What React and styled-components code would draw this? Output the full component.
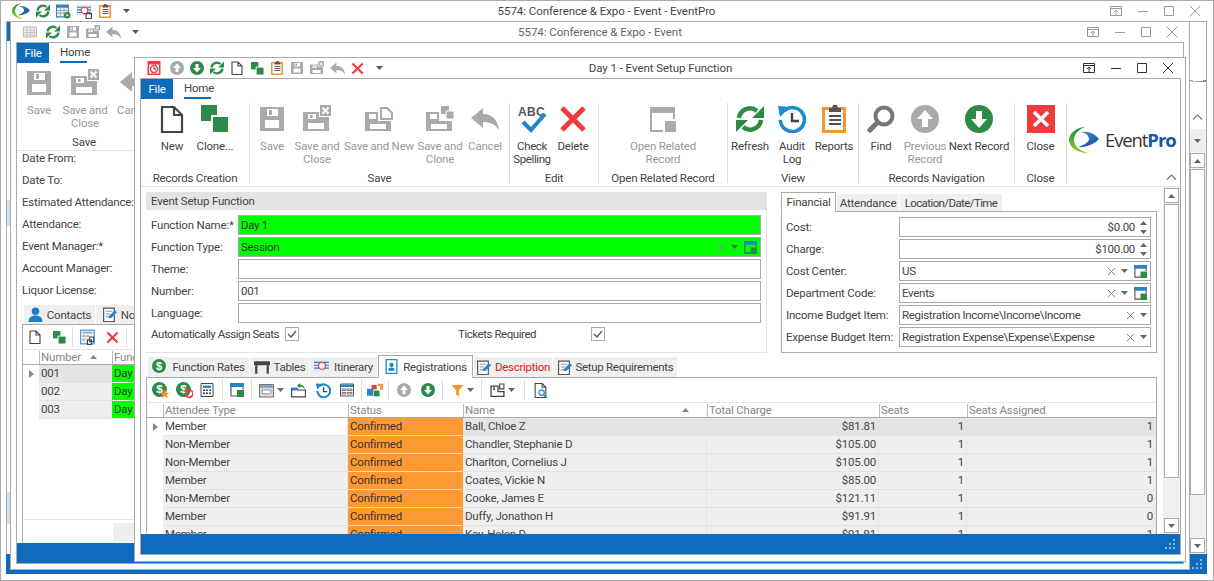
import styled, { createGlobalStyle } from "styled-components";

const GREEN = "#2e8b47";
const BLUE = "#0f6cbd";
const LINE = "#aaaaaa";
const SOFT = "#e4e4e4";
const TEXT = "#444444";

const Global = createGlobalStyle`
  html, body { margin: 0; padding: 0; background: #fff; }
  body { font-family: Roboto, "Liberation Sans", sans-serif; font-size: 11.5px; letter-spacing: -0.2px; color: ${TEXT}; }
  * { box-sizing: border-box; }
`;

const Desktop = styled.div`
  position: relative;
  width: 1214px;
  height: 581px;
  overflow: hidden;
  background: #fff;
`;

/* outer application frame */
const Shell = styled.div`
  width: 1214px;
  height: 581px;
  border: 1px solid ${LINE};
  display: flex;
  flex-direction: column;
  padding: 0 6px 6px 5px;
`;
const TitleBar = styled.div`
  flex: none;
  height: ${(p) => p.$h || 20}px;
  display: flex;
  align-items: center;
  position: relative;
  color: ${(p) => (p.$dim ? "#666" : TEXT)};
`;
const TitleText = styled.div`
  position: absolute;
  left: 0;
  right: 0;
  text-align: center;
  letter-spacing: -0.05px;
  pointer-events: none;
`;
const Qat = styled.div`
  display: flex;
  align-items: center;
  gap: ${(p) => p.$gap || 0}px;
  padding-left: ${(p) => p.$left || 0}px;
`;
const WinButtons = styled.div`
  margin-left: auto;
  display: flex;
  align-items: center;
  gap: ${(p) => p.$gap || 12}px;
  padding-right: ${(p) => p.$right || 0}px;
`;
const ShellClient = styled.div`
  flex: 1;
  min-height: 0;
  border: 1px solid ${LINE};
  border-bottom: none;
  border-right: none;
  display: flex;
`;
const ShellStrip = styled.div`
  width: 3px;
  background: linear-gradient(
    to bottom,
    ${BLUE} 0 19px,
    #fff 19px 178px,
    #cfe2f3 178px 204px,
    #fff 204px 470px,
    #cfe2f3 470px 502px,
    #fff 502px 532px,
    ${BLUE} 532px
  );
`;
const ShellGap = styled.div`
  flex: 1;
`;
const SideColumn = styled.div`
  flex: none;
  width: 18px;
  border-right: 1px solid ${LINE};
  display: flex;
  flex-direction: column;
  align-items: stretch;
`;
const SideLogo = styled.div`
  height: 60px;
  padding-top: 56px;
  font-size: 7px;
  line-height: 10px;
  letter-spacing: -0.4px;
  white-space: nowrap;
  overflow: hidden;
  color: #555;
  b { color: ${BLUE}; }
`;
const SideChevron = styled.div`
  height: 47px;
  display: flex;
  align-items: center;
  justify-content: center;
  padding-top: 22px;
`;
const SideDrop = styled.div`
  height: 23px;
  background: #efefef;
  display: flex;
  align-items: center;
  justify-content: center;
`;
const ScrollTrack = styled.div`
  flex: ${(p) => (p.$row ? "none" : "1")};
  min-height: 0;
  background: #f0f0f0;
  display: flex;
  flex-direction: column;
  width: 17px;
  padding: 1px;
  gap: 1px;
`;
const ScrollBtn = styled.div`
  flex: none;
  height: 15px;
  background: #fff;
  border: 1px solid ${LINE};
  display: flex;
  align-items: center;
  justify-content: center;
`;
const ScrollThumb = styled.div`
  flex: none;
  height: ${(p) => p.$h}px;
  background: #fff;
  border: 1px solid ${LINE};
  margin-bottom: auto;
`;
const Grip = styled.div`
  margin-left: auto;
  display: flex;
  align-items: flex-end;
  padding: 0 4px 4px 0;
  height: 100%;
`;
const StatusBar = styled.div`
  flex: none;
  height: 20px;
  background: ${BLUE};
  display: flex;
`;

/* windows on the desktop */
const EventWindow = styled.div`
  position: absolute;
  z-index: 1;
  left: 10px;
  top: 21px;
  width: 1180px;
  height: 549px;
  background: #fff;
  border: 1px solid ${LINE};
  padding: 0 5px 5px 5px;
  display: flex;
  flex-direction: column;
`;
const FunctionWindow = styled.div`
  position: absolute;
  z-index: 2;
  left: 134px;
  top: 57px;
  width: 1052px;
  height: 505px;
  background: #fff;
  border: 1px solid ${LINE};
  padding: 0 4px 6px 5px;
  display: flex;
  flex-direction: column;
`;
const Inner = styled.div`
  flex: 1;
  min-height: 0;
  border: 1px solid ${LINE};
  display: flex;
  flex-direction: column;
  overflow: hidden;
`;

/* ribbon */
const RibbonTabs = styled.div`
  flex: none;
  height: 21px;
  display: flex;
`;
const FileTab = styled.div`
  width: 32px;
  height: 20px;
  background: ${BLUE};
  color: #fff;
  display: flex;
  align-items: center;
  justify-content: center;
`;
const HomeTab = styled.div`
  margin-left: 11px;
  width: 27px;
  height: 20px;
  border-bottom: 2px solid ${BLUE};
  text-align: center;
  line-height: 18px;
`;
const Ribbon = styled.div`
  flex: none;
  height: 87px;
  border-bottom: 1px solid ${SOFT};
  display: flex;
`;
const RibbonGroup = styled.div`
  flex: none;
  width: ${(p) => p.$w}px;
  display: flex;
  flex-direction: column;
  padding-top: 5px;
`;
const GroupButtons = styled.div`
  flex: 1;
  display: flex;
  justify-content: ${(p) => (p.$center ? "center" : "flex-start")};
  padding-left: ${(p) => p.$left || 0}px;
`;
const GroupLabel = styled.div`
  height: 16px;
  padding-top: 1px;
  line-height: 14px;
  text-align: center;
  white-space: nowrap;
`;
const RibbonSep = styled.div`
  flex: none;
  width: 1px;
  margin: 3px 0 3px;
  background: #dddddd;
`;
const RibbonButton = styled.div`
  flex: none;
  width: ${(p) => p.$w}px;
  display: flex;
  flex-direction: column;
  align-items: center;
  color: ${(p) => (p.$off ? "#999" : TEXT)};
  text-align: center;
  line-height: 13px;
  white-space: nowrap;
  span { margin-top: 7px; }
`;
const SpellLabel = styled.span`
  && { margin-top: 5px; letter-spacing: -0.4px; }
`;
const LogoGroup = styled.div`
  flex: 1;
  display: flex;
  flex-direction: column;
  padding: 25px 0 0 2px;
`;
const LogoRow = styled.div`
  display: flex;
  align-items: center;
  gap: 6px;
`;
const LogoWord = styled.div`
  font-family: "Open Sans", sans-serif;
  font-size: 18.500px;
  letter-spacing: -1.1px;
  line-height: 26px;
  color: #333;
  b { color: #17599f; font-weight: 700; }
`;
const Collapse = styled.div`
  align-self: flex-end;
  margin-top: auto;
  padding: 0 3px 6px 0;
`;

/* form panels */
const Body = styled.div`
  flex: 1;
  min-height: 0;
  display: flex;
`;
const BodyMain = styled.div`
  flex: 1;
  min-width: 0;
  padding: 5px 6px 0 5px;
  display: flex;
  flex-direction: column;
`;
const TopPanels = styled.div`
  flex: none;
  display: flex;
  gap: 14px;
`;
const SetupPanel = styled.div`
  flex: none;
  width: 621px;
  height: 161px;
  border-right: 1px solid ${SOFT};
  border-bottom: 1px solid ${SOFT};
`;
const PanelHead = styled.div`
  height: 18px;
  background: ${SOFT};
  padding-left: 5px;
  line-height: 18px;
`;
const FormRows = styled.div`
  display: flex;
  flex-direction: column;
  gap: 2px;
  padding: ${(p) => (p.$side ? "5px 0 0 4px" : "5px 0 0 5px")};
`;
const FormRow = styled.div`
  display: flex;
  align-items: center;
  height: 20px;
`;
const Label = styled.div`
  flex: none;
  width: ${(p) => p.$w}px;
  white-space: nowrap;
`;
const Field = styled.div`
  flex: none;
  width: ${(p) => p.$w}px;
  height: 20px;
  border: 1px solid ${LINE};
  background: ${(p) => (p.$green ? "#00ff00" : "#fff")};
  color: ${(p) => (p.$green ? "#333" : TEXT)};
  display: flex;
  align-items: center;
  padding: 0 3px 0 2px;
  letter-spacing: -0.3px;
  white-space: nowrap;
`;
const FieldValue = styled.div`
  flex: 1;
  text-align: ${(p) => (p.$right ? "right" : "left")};
  padding-right: ${(p) => (p.$right ? 5 : 0)}px;
`;
const FieldTools = styled.div`
  flex: none;
  display: flex;
  align-items: center;
  gap: 6px;
`;
const Spinner = styled.div`
  display: flex;
  flex-direction: column;
  gap: 5px;
`;
const CheckRow = styled.div`
  display: flex;
  align-items: center;
  height: 14px;
  margin-top: 4px;
  padding-left: 5px;
  letter-spacing: -0.45px;
`;
const CheckBox = styled.div`
  flex: none;
  width: 14px;
  height: 14px;
  border: 1px solid ${LINE};
  display: flex;
  align-items: center;
  justify-content: center;
  margin-right: ${(p) => p.$after || 0}px;
`;
const SidePanel = styled.div`
  flex: none;
  width: 376px;
`;
const TabStrip = styled.div`
  display: flex;
  align-items: flex-end;
  height: ${(p) => p.$h}px;
  gap: ${(p) => p.$gap ?? 1}px;
  padding-left: ${(p) => p.$left || 0}px;
  position: relative;
  z-index: 1;
  margin-bottom: -1px;
`;
const Tab = styled.div`
  flex: none;
  width: ${(p) => p.$w}px;
  height: ${(p) => (p.$active ? "100%" : "calc(100% - 3px)")};
  margin-bottom: ${(p) => (p.$active ? 0 : 1)}px;
  background: ${(p) => (p.$active ? "#fff" : "#efefef")};
  border: ${(p) => (p.$active ? `1px solid ${LINE}` : "none")};
  border-bottom: ${(p) => (p.$active ? "1px solid #fff" : "none")};
  color: ${(p) => (p.$red ? "#ee1122" : TEXT)};
  letter-spacing: ${(p) => (p.$tight ? "-0.6px" : "inherit")};
  display: flex;
  align-items: center;
  justify-content: center;
  gap: 4px;
  white-space: nowrap;
`;
const SideBox = styled.div`
  height: 142px;
  border: 1px solid ${LINE};
`;

/* lower grid */
const LowerTabs = styled.div`
  flex: none;
  margin-top: 2px;
  letter-spacing: -0.3px;
`;
const GridBox = styled.div`
  flex: 1;
  min-height: 0;
  border: 1px solid ${LINE};
  border-bottom: none;
  overflow: hidden;
`;
const Toolbar = styled.div`
  height: 25px;
  border-bottom: 1px solid ${SOFT};
  display: flex;
  align-items: center;
  padding-left: ${(p) => p.$left || 0}px;
`;
const ToolSlot = styled.div`
  flex: none;
  width: ${(p) => p.$w || 24}px;
  height: 16px;
  display: flex;
  align-items: center;
  justify-content: center;
  gap: 3px;
`;
const ToolSep = styled.div`
  flex: none;
  width: 1px;
  height: 20px;
  background: #dddddd;
  margin: 0 ${(p) => p.$m || 2}px;
`;
const GridHead = styled.div`
  display: grid;
  grid-template-columns: ${(p) => p.$cols};
  height: 15px;
  border-bottom: 1px solid ${LINE};
`;
const HeadCell = styled.div`
  color: #888;
  border-left: 1px solid #bbb;
  padding: 0 0 2px 1px;
  line-height: 12px;
  height: 13px;
  margin-top: 1px;
  display: flex;
  align-items: center;
  justify-content: space-between;
  white-space: nowrap;
  overflow: hidden;
`;
const GridRow = styled.div`
  display: grid;
  grid-template-columns: ${(p) => p.$cols};
  height: 18px;
`;
const Cell = styled.div`
  background: ${(p) => p.$bg || "#efefef"};
  color: ${(p) => (p.$strong ? "#333" : TEXT)};
  border-bottom: 1px solid ${(p) => (p.$bg === "#ff9933" ? "#ffd9b0" : p.$bg === "#00ff00" ? "#d8f8d8" : "#e2e2e2")};
  border-right: 1px solid ${(p) => (p.$bg === "#ff9933" || p.$bg === "#00ff00" ? "transparent" : "#e6e6e6")};
  padding: 0 ${(p) => (p.$right ? 2 : 1)}px 0 2px;
  line-height: 17px;
  text-align: ${(p) => (p.$right ? "right" : "left")};
  white-space: nowrap;
  overflow: hidden;
`;
const Indicator = styled.div`
  background: #fff;
  display: flex;
  align-items: center;
  justify-content: center;
  height: 18px;
`;

/* left column of the event window */
const EventBody = styled.div`
  flex: 1;
  min-height: 0;
  display: flex;
  flex-direction: column;
`;
const EventForm = styled.div`
  flex: none;
  height: 152px;
  padding: 0 0 0 5px;
  display: flex;
  flex-direction: column;
  gap: 8px;
`;
const EventLabel = styled.div`
  height: 14px;
  line-height: 14px;
  white-space: nowrap;
`;
const ContactPanel = styled.div`
  flex: 1;
  min-height: 0;
  margin-left: 5px;
  border-left: 1px solid ${LINE};
  border-top: 1px solid ${LINE};
  display: flex;
  flex-direction: column;
`;
const ContactSpacer = styled.div`
  flex: 1;
  border-bottom: 1px solid ${SOFT};
`;
const ContactFoot = styled.div`
  flex: none;
  height: 23px;
  padding: 3px 0 2px 90px;
  div { height: 18px; background: #efefef; }
`;

/* icons */
const Svg = ({ s = 28, vb = 28, children }) => (
  <svg width={s} height={s} viewBox={`0 0 ${vb} ${vb}`} style={{ flex: "none", display: "block" }}>
    {children}
  </svg>
);
const Floppy = ({ s, c = "#aaa" }) => (
  <Svg s={s}>
    <path fill={c} fillRule="evenodd" d="M2 2h24v24H2zM9 4v7h11V4zM7 15v8h14v-8z" />
    <path fill={c} d="M11 5h3v5h-3z" />
  </Svg>
);
const FloppyClose = ({ s, c = "#aaa" }) => (
  <Svg s={s}>
    <path fill={c} fillRule="evenodd" d="M0 7h16v5h10v14H0zM5 9v5h8V9zM5 18v6h16v-6z" />
    <path fill={c} d="M7 10h2.500v3H7z" />
    <path fill={c} d="M17 0h11v11H17z" />
    <path stroke="#fff" strokeWidth="2" d="M19.500 2.500l6 6M25.500 2.500l-6 6" />
  </Svg>
);
const FloppyNew = ({ s, c = "#aaa" }) => (
  <Svg s={s}>
    <path fill={c} fillRule="evenodd" d="M0 7h13v9h13v10H0zM4 9v5h7V9zM5 19v5h16v-5z" />
    <path fill="none" stroke={c} strokeWidth="2" d="M16 14V3h6l5 5v6z" />
  </Svg>
);
const FloppyClone = ({ s, c = "#aaa" }) => (
  <Svg s={s}>
    <path fill={c} fillRule="evenodd" d="M0 7h13v9h13v10H0zM4 9v5h7V9zM5 19v5h16v-5z" />
    <path fill={c} d="M15 1h8v8h-8z" />
    <path fill={c} stroke="#fff" strokeWidth="1" d="M20 6h8v8h-8z" />
  </Svg>
);
const UndoArrow = ({ s, c = "#aaa" }) => (
  <Svg s={s}>
    <path fill={c} d="M12 3L0 13l12 10v-6c7 0 12 2 16 8-1-10-7-16-16-16z" />
  </Svg>
);
const DocIcon = ({ s, c = "#444" }) => (
  <Svg s={s}>
    <path fill="#fff" stroke={c} strokeWidth="2.200" d="M4 2h12l8 8v17H4zM16 2v8h8" />
  </Svg>
);
const CloneIcon = ({ s }) => (
  <Svg s={s}>
    <path fill={GREEN} d="M0 0h16v16H0z" />
    <path fill={GREEN} stroke="#fff" strokeWidth="2" d="M11 11h17v17H11z" />
  </Svg>
);
const XIcon = ({ s, c = "#ee3c3c", w = 5 }) => (
  <Svg s={s}>
    <path stroke={c} strokeWidth={w} d="M3 3l22 22M25 3L3 25" />
  </Svg>
);
const CircleArrow = ({ s, c = "#aaa", down }) => (
  <Svg s={s}>
    <circle cx="14" cy="14" r="14" fill={c} />
    <path fill="#fff" d={down ? "M11 6h6v8h5l-8 9-8-9h5z" : "M11 22h6v-8h5l-8-9-8 9h5z"} />
  </Svg>
);
const Refresh = ({ s }) => (
  <Svg s={s}>
    <path fill="none" stroke={GREEN} strokeWidth="4.500" d="M3 13A11 11 0 0 1 21 6M25 15A11 11 0 0 1 7 22" />
    <path fill={GREEN} d="M28 1v12H16zM0 27V15h12z" />
  </Svg>
);
const ReportIcon = ({ s }) => (
  <Svg s={s}>
    <path fill="#f7962f" d="M2 2h24v26H2z" />
    <path fill="#fff" d="M5 5h18v20H5z" />
    <path fill="#555" d="M9 3h3l1-3h4l1 3h3v4H9zM9 10h12v2H9zM9 14h12v2H9zM9 18h12v2H9z" />
  </Svg>
);
const AuditIcon = ({ s }) => (
  <Svg s={s}>
    <path fill="none" stroke="#1f8ad0" strokeWidth="3.600" d="M6 6A12 12 0 1 1 2.400 15" />
    <path fill="#1f8ad0" d="M0 1l12 1-10 10z" />
    <path fill="none" stroke="#444" strokeWidth="2.400" d="M14 8v8h7" />
  </Svg>
);
const FindIcon = ({ s }) => (
  <Svg s={s}>
    <circle cx="17" cy="11" r="8.500" fill="none" stroke="#777" strokeWidth="4" />
    <path stroke="#777" strokeWidth="5" strokeLinecap="round" d="M10 18l-7 7" />
  </Svg>
);
const SpellIcon = () => (
  <Svg s={30} vb={30}>
    <text x="1" y="11" fontFamily="'Liberation Sans', sans-serif" fontWeight="700" fontSize="12" letterSpacing="0.300" fill="#555">
      ABC
    </text>
    <path fill="none" stroke="#1f88cc" strokeWidth="4" d="M6 17l8 8L28 9" />
  </Svg>
);
const RelatedIcon = ({ s, c = "#aaa" }) => (
  <Svg s={s}>
    <path fill="none" stroke={c} strokeWidth="2" d="M2 3h23v23H2z" />
    <path fill={c} d="M1 2h25v6H1z" />
    <path fill={c} stroke="#fff" strokeWidth="2" d="M15 15h13v13H15z" />
  </Svg>
);
const CloseSquare = ({ s }) => (
  <Svg s={s}>
    <path fill="#ee3c3c" d="M0 0h28v28H0z" />
    <path stroke="#fff" strokeWidth="3.500" d="M7 7l14 14M21 7L7 21" />
  </Svg>
);
const LogoMark = ({ s = 30, id = "a" }) => (
  <Svg s={s} vb={30}>
    <defs>
      <linearGradient id={`g${id}`} x1="0" y1="0" x2="0" y2="1">
        <stop offset="0" stopColor="#1c8a3a" />
        <stop offset="1" stopColor="#98cb2c" />
      </linearGradient>
      <linearGradient id={`b${id}`} x1="0" y1="0" x2="1" y2="1">
        <stop offset="0" stopColor="#3f9fdf" />
        <stop offset="1" stopColor="#123d8e" />
      </linearGradient>
    </defs>
    <path fill={`url(#g${id})`} d="M16 2C6 3 0 9 0 15c0 7 8 13 19 13-8-2-14-7-14-13C5 9 10 4 16 2z" />
    <path fill={`url(#b${id})`} d="M12 7c7-1 13 1 18 7-5 5-13 9-21 8 6-2 11-5 11-8 0-3-3-6-8-7z" />
  </Svg>
);
const AlarmIcon = ({ s }) => (
  <Svg s={s}>
    <path fill="#ee3c3c" d="M1 0h26v28H1z" />
    <path fill="#fff" d="M4 7h20v18H4z" />
    <circle cx="14" cy="16" r="7" fill="none" stroke="#ee3c3c" strokeWidth="3" />
    <path stroke="#333" strokeWidth="2" fill="none" d="M14 12v4h4" />
  </Svg>
);
const SheetIcon = ({ s, c = "#bbb", edge = "#bbb" }) => (
  <Svg s={s}>
    <path fill="#f4f4f4" stroke={edge} strokeWidth="2" d="M1 4h26v20H1z" />
    <path stroke={c} strokeWidth="1.500" d="M1 10h26M1 15h26M1 20h26M8 4v20M15 4v20M22 4v20" />
  </Svg>
);
const GridGearIcon = ({ s }) => (
  <Svg s={s}>
    <path fill="#eef4fa" stroke="#2a83c6" strokeWidth="2" d="M1 2h22v22H1z" />
    <path fill="#2a83c6" d="M1 2h22v5H1z" />
    <path stroke="#9a9a9a" strokeWidth="1.600" d="M1 12h22M1 17h22M8 7v17M15 7v17" />
    <circle cx="21" cy="21" r="6" fill={GREEN} />
    <circle cx="21" cy="21" r="2" fill="#fff" />
  </Svg>
);
const GridClockIcon = ({ s, badge }) => (
  <Svg s={s}>
    <path fill="#dcebf7" d="M0 1h26v20H0z" />
    <path stroke="#1f88cc" strokeWidth="2" d="M0 6h26M0 11h26M0 16h26" />
    <circle cx="14" cy="12" r="6" fill="#fff" stroke="#ee3c3c" strokeWidth="2" />
    {badge && <path fill="#fff" stroke="#444" strokeWidth="2" d="M17 18h10v9H17z" />}
  </Svg>
);
const SheetCopyIcon = ({ s }) => (
  <Svg s={s}>
    <path fill="#e8f1f8" stroke="#4a9ad4" strokeWidth="2" d="M1 2h24v24H1z" />
    <path fill="#aaa" d="M4 5h18v3H4zM4 11h5v3H4zM11 11h5v3h-5zM4 17h5v3H4z" />
    <path fill="#fff" stroke="#444" strokeWidth="2" d="M17 14h7v8h-7zM13 19h7v8h-7z" />
  </Svg>
);
const DollarIcon = ({ s = 16, badge }) => (
  <Svg s={s} vb={16}>
    <circle cx="7" cy="7" r="7" fill={GREEN} />
    <text x="7" y="10.800" textAnchor="middle" fontFamily="'Liberation Sans', sans-serif" fontWeight="700" fontSize="11" fill="#fff">
      $
    </text>
    {badge === "star" && <path fill="#f7962f" d="M12 7l1.400 3h3l-2.400 2 1 3.200L12 13.400 9 15.200l1-3.200-2.400-2h3z" />}
    {badge === "refresh" && <path fill="none" stroke="#ee3c3c" strokeWidth="1.600" d="M9 11a3.500 3.500 0 1 0 1.500-3M9 6.500V9h2.500" />}
  </Svg>
);
const CalcIcon = ({ s }) => (
  <Svg s={s}>
    <path fill="#fff" stroke="#444" strokeWidth="2" d="M2 1h24v26H2z" />
    <path fill="#2a83c6" d="M6 5h16v5H6z" />
    <path fill="#444" d="M6 13h4v3H6zM12 13h4v3h-4zM18 13h4v3h-4zM6 19h4v3H6zM12 19h4v3h-4zM18 19h4v3h-4z" />
  </Svg>
);
const PickIcon = ({ s = 13 }) => (
  <Svg s={s}>
    <path fill="none" stroke="#555" strokeWidth="2.400" d="M2 4v22h13M26 4v9" />
    <path fill="#2a83c6" d="M0 0h28v8H0z" />
    <path fill={GREEN} d="M14 14h14v14H14z" />
  </Svg>
);
const WindowDropIcon = ({ s }) => (
  <Svg s={s}>
    <path fill="#ddd" stroke="#777" strokeWidth="2" d="M1 3h26v23H1z" />
    <path fill="#7aa9cf" d="M2 4h24v5H2z" />
    <path fill="#fff" stroke="#888" strokeWidth="1.600" d="M6 13h16v7H6z" />
  </Svg>
);
const FolderUpIcon = ({ s }) => (
  <Svg s={s}>
    <path fill="#fff" stroke="#444" strokeWidth="2.200" d="M1 10h10l2 3h14v13H1z" />
    <path fill="#2a83c6" d="M1 9h11V14H1z" />
    <path fill={GREEN} d="M17 0l-6 5 6 5V7c4 0 7 1 8 5 1-6-3-8-8-9z" />
  </Svg>
);
const HistoryIcon = ({ s }) => (
  <Svg s={s}>
    <path fill="none" stroke="#1f8ad0" strokeWidth="4" d="M6 6A12 12 0 1 1 2.400 15" />
    <path fill="#1f8ad0" d="M0 1l12 1-10 10z" />
    <path fill="none" stroke="#444" strokeWidth="2.600" d="M14 8v8h7" />
  </Svg>
);
const PanelsIcon = ({ s }) => (
  <Svg s={s}>
    <path fill="#fff" stroke="#555" strokeWidth="2" d="M1 2h26v24H1z" />
    <path fill="#2a83c6" d="M2 3h24v5H2z" />
    <path fill="none" stroke="#777" strokeWidth="2" d="M4 12h8v3H4zM4 19h8v3H4zM15 12h9v3h-9zM15 19h9v3h-9z" />
  </Svg>
);
const BlocksIcon = ({ s }) => (
  <Svg s={s}>
    <path fill="#2a83c6" d="M0 12h11v12H0z" />
    <path fill={GREEN} d="M12 15h10v10H12z" />
    <path fill="#e0483a" d="M8 5h9v8H8z" />
    <path fill="#f7962f" d="M19 3h9v11h-5V7h-4z" />
  </Svg>
);
const FilterIcon = ({ s }) => (
  <Svg s={s}>
    <path fill="#f7962f" d="M1 2h26L17 14v13l-6-4v-9z" />
  </Svg>
);
const LayoutIcon = ({ s }) => (
  <Svg s={s}>
    <path fill="none" stroke="#444" strokeWidth="2.400" d="M2 6h13v10h11v9H2z" />
    <path fill="#444" d="M6 8h3v5H6z" />
    <path fill="none" stroke="#444" strokeWidth="2" d="M18 2h8v9h-8z" />
  </Svg>
);
const PreviewIcon = ({ s }) => (
  <Svg s={s}>
    <path fill="#fff" stroke="#444" strokeWidth="2" d="M4 1h13l7 7v19H4zM17 1v7h7" />
    <circle cx="16" cy="18" r="5" fill="#fff" stroke="#1f88cc" strokeWidth="2.400" />
    <path stroke="#1f88cc" strokeWidth="2.600" d="M20 22l5 5" />
  </Svg>
);
const NoteIcon = ({ s = 15 }) => (
  <Svg s={s}>
    <path fill="#fff" stroke="#555" strokeWidth="2.200" d="M3 2h20v25H3z" />
    <path stroke="#999" strokeWidth="2" d="M7 8h12M7 13h8M7 18h6" />
    <path fill="#2a83c6" d="M12 21l2-5L24 6l4 4-10 10z" />
  </Svg>
);
const TableTabIcon = ({ s = 16 }) => (
  <Svg s={s}>
    <path fill="#444" d="M2 4h24a2 2 0 0 1 2 2v5H0V6a2 2 0 0 1 2-2z" />
    <path fill="#444" d="M2 11h4v15H2zM22 11h4v15h-4z" />
  </Svg>
);
const PersonIcon = ({ s = 15 }) => (
  <Svg s={s}>
    <circle cx="14" cy="8" r="7" fill="#1f7fc4" />
    <path fill="#1f7fc4" d="M1 28c0-8 5-12 13-12s13 4 13 12z" />
  </Svg>
);
const BadgeIcon = ({ s = 15 }) => (
  <Svg s={s}>
    <path fill="#fff" stroke="#1f88cc" strokeWidth="2.400" d="M4 1h20v26H4z" />
    <circle cx="14" cy="11" r="4" fill="#1f7fc4" />
    <path fill="#1f7fc4" d="M8 22c0-4 2-6 6-6s6 2 6 6z" />
  </Svg>
);
const Caret = ({ c = "#666", up, w = 7 }) => (
  <svg width={w} height={4} viewBox="0 0 7 4" style={{ flex: "none", display: "block" }}>
    <path fill={c} d={up ? "M3.500 0L7 4H0z" : "M0 0h7L3.500 4z"} />
  </svg>
);
const MiniX = ({ c = "#888" }) => (
  <svg width={7} height={7} viewBox="0 0 7 7" style={{ flex: "none", display: "block" }}>
    <path stroke={c} strokeWidth="1" d="M0 0l7 7M7 0L0 7" />
  </svg>
);
const Chevron = ({ c = "#777" }) => (
  <svg width={11} height={6} viewBox="0 0 11 6" style={{ flex: "none", display: "block" }}>
    <path fill="none" stroke={c} strokeWidth="1.200" d="M1 5.500l4.500-4.500 4.500 4.500" />
  </svg>
);
const RowArrow = () => (
  <svg width={5} height={8} viewBox="0 0 5 8" style={{ display: "block" }}>
    <path fill="#888" d="M0 0l5 4-5 4z" />
  </svg>
);
const CheckMark = () => (
  <svg width={10} height={8} viewBox="0 0 10 8" style={{ display: "block" }}>
    <path fill="none" stroke="#555" strokeWidth="1.300" d="M1 4l3 3 5-6" />
  </svg>
);
const GripDots = () => (
  <svg width={11} height={11} viewBox="0 0 11 11" style={{ display: "block" }}>
    <path fill="#8db8de" d="M8 0h2v2H8zM4 4h2v2H4zM8 4h2v2H8zM0 8h2v2H0zM4 8h2v2H4zM8 8h2v2H8z" />
  </svg>
);
const WinControls = ({ c, right }) => (
  <WinButtons $gap={16} $right={right}>
    <svg width={12} height={10} viewBox="0 0 12 10" style={{ display: "block" }}>
      <path fill="none" stroke={c} strokeWidth="1" d="M.5.500h11v9H.5zM.5 2.500h11" />
      <path fill="none" stroke={c} strokeWidth="1" d="M6 9V4.500M4 6l2-2 2 2" />
    </svg>
    <svg width={10} height={10} viewBox="0 0 10 10" style={{ display: "block" }}>
      <path stroke={c} d="M0 5.500h10" />
    </svg>
    <svg width={10} height={10} viewBox="0 0 10 10" style={{ display: "block" }}>
      <path fill="none" stroke={c} d="M.5.500h9v9h-9z" />
    </svg>
    <svg width={10} height={10} viewBox="0 0 10 10" style={{ display: "block" }}>
      <path stroke={c} d="M0 0l10 10M10 0L0 10" />
    </svg>
  </WinButtons>
);

const LOWER_COLS = "16px 185px 115px 244px 172px 88px 1fr";
const CONTACT_COLS = "16px 73px 1fr";

const people = [
  ["Member", "Ball, Chloe Z", "$81.81", 1, 1],
  ["Non-Member", "Chandler, Stephanie D", "$105.00", 1, 1],
  ["Non-Member", "Charlton, Cornelius J", "$105.00", 1, 1],
  ["Member", "Coates, Vickie N", "$85.00", 1, 1],
  ["Non-Member", "Cooke, James E", "$121.11", 1, 0],
  ["Member", "Duffy, Jonathon H", "$91.91", 1, 0],
  ["Member", "Kay, Helen D", "$91.91", 1, 1],
];

function RegistrationRow({ row, index }) {
  const first = index === 0;
  const bg = first ? SOFT : "#efefef";
  return (
    <GridRow $cols={LOWER_COLS}>
      <Indicator>{first && <RowArrow />}</Indicator>
      <Cell $bg={first ? "#fff" : "#efefef"}>{row[0]}</Cell>
      <Cell $bg="#ff9933" $strong>Confirmed</Cell>
      <Cell $bg={bg}>{row[1]}</Cell>
      <Cell $bg={bg} $right>{row[2]}</Cell>
      <Cell $bg={bg} $right>{row[3]}</Cell>
      <Cell $bg={bg} $right>{row[4]}</Cell>
    </GridRow>
  );
}

function PickTools({ pick }) {
  return (
    <FieldTools>
      <MiniX />
      <Caret />
      {pick && <PickIcon />}
    </FieldTools>
  );
}

function SideField({ label, value, pick }) {
  return (
    <FormRow>
      <Label $w={113}>{label}</Label>
      <Field $w={252}>
        <FieldValue>{value}</FieldValue>
        <PickTools pick={pick} />
      </Field>
    </FormRow>
  );
}

function MoneyField({ label, value }) {
  return (
    <FormRow>
      <Label $w={113}>{label}</Label>
      <Field $w={252}>
        <FieldValue $right>{value}</FieldValue>
        <Spinner>
          <Caret up />
          <Caret />
        </Spinner>
      </Field>
    </FormRow>
  );
}

function EventWindowView() {
  return (
    <EventWindow>
      <TitleBar $dim>
        <TitleText>5574: Conference &amp; Expo - Event</TitleText>
        <Qat $left={4}>
          <ToolSlot $w={20}><SheetIcon s={14} /></ToolSlot>
          <ToolSlot $w={26}><Refresh s={14} /></ToolSlot>
          <ToolSlot $w={14}><Floppy s={14} /></ToolSlot>
          <ToolSlot $w={26}><FloppyClose s={14} /></ToolSlot>
          <ToolSlot $w={14}><UndoArrow s={15} /></ToolSlot>
          <ToolSlot $w={30}><Caret c="#555" /></ToolSlot>
        </Qat>
        <WinControls c="#999" right={7} />
      </TitleBar>
      <Inner>
        <RibbonTabs>
          <FileTab>File</FileTab>
          <HomeTab>Home</HomeTab>
        </RibbonTabs>
        <Ribbon>
          <RibbonGroup $w={134}>
            <GroupButtons>
              <RibbonButton $w={44} $off>
                <Floppy s={28} />
                <span>Save</span>
              </RibbonButton>
              <RibbonButton $w={48} $off>
                <FloppyClose s={28} />
                <span>Save and<br />Close</span>
              </RibbonButton>
              <RibbonButton $w={50} $off>
                <UndoArrow s={28} />
                <span>Cancel</span>
              </RibbonButton>
            </GroupButtons>
            <GroupLabel>Save</GroupLabel>
          </RibbonGroup>
        </Ribbon>
        <EventBody>
          <EventForm>
            <EventLabel>Date From:</EventLabel>
            <EventLabel>Date To:</EventLabel>
            <EventLabel>Estimated Attendance:</EventLabel>
            <EventLabel>Attendance:</EventLabel>
            <EventLabel>Event Manager:*</EventLabel>
            <EventLabel>Account Manager:</EventLabel>
            <EventLabel>Liquor License:</EventLabel>
          </EventForm>
          <TabStrip $h={22} $left={7} $gap={1}>
            <Tab $w={71}>
              <PersonIcon />
              Contacts
            </Tab>
            <Tab $w={60}>
              <NoteIcon />
              Notes
            </Tab>
          </TabStrip>
          <ContactPanel>
            <Toolbar>
              <ToolSlot><DocIcon s={14} /></ToolSlot>
              <ToolSlot><CloneIcon s={13} /></ToolSlot>
              <ToolSep $m={1} />
              <ToolSlot $w={28}><SheetCopyIcon s={16} /></ToolSlot>
              <ToolSlot $w={20}><XIcon s={13} w={4.5} /></ToolSlot>
              <ToolSep $m={4} />
            </Toolbar>
            <GridHead $cols={CONTACT_COLS}>
              <div />
              <HeadCell>
                Number
                <span style={{ paddingRight: 14 }}><Caret up c="#888" w={9} /></span>
              </HeadCell>
              <HeadCell>Function</HeadCell>
            </GridHead>
            {["001", "002", "003"].map((n, i) => (
              <GridRow $cols={CONTACT_COLS} key={n}>
                <Indicator>{i === 0 && <RowArrow />}</Indicator>
                <Cell $bg={i === 0 ? SOFT : "#efefef"}>{n}</Cell>
                <Cell $bg="#00ff00" $strong>Day 1</Cell>
              </GridRow>
            ))}
            <ContactSpacer />
            <ContactFoot><div /></ContactFoot>
          </ContactPanel>
        </EventBody>
        <StatusBar />
      </Inner>
    </EventWindow>
  );
}

function FunctionWindowView() {
  return (
    <FunctionWindow>
      <TitleBar>
        <TitleText>Day 1 - Event Setup Function</TitleText>
        <Qat $left={4}>
          <ToolSlot $w={20}><AlarmIcon s={14} /></ToolSlot>
          <ToolSlot $w={3} />
          <ToolSlot $w={20}><CircleArrow s={14} /></ToolSlot>
          <ToolSlot $w={20}><CircleArrow s={14} c={GREEN} down /></ToolSlot>
          <ToolSlot $w={20}><Refresh s={14} /></ToolSlot>
          <ToolSlot $w={20}><DocIcon s={14} /></ToolSlot>
          <ToolSlot $w={20}><CloneIcon s={13} /></ToolSlot>
          <ToolSlot $w={20}><ReportIcon s={14} /></ToolSlot>
          <ToolSlot $w={20}><Floppy s={14} /></ToolSlot>
          <ToolSlot $w={20}><FloppyClose s={14} /></ToolSlot>
          <ToolSlot $w={20}><UndoArrow s={15} /></ToolSlot>
          <ToolSlot $w={20}><XIcon s={13} w={4.5} /></ToolSlot>
          <ToolSlot $w={24}><Caret c="#555" /></ToolSlot>
        </Qat>
        <WinControls c="#333" right={8} />
      </TitleBar>
      <Inner>
        <RibbonTabs>
          <FileTab>File</FileTab>
          <HomeTab>Home</HomeTab>
        </RibbonTabs>
        <Ribbon>
          <RibbonGroup $w={108}>
            <GroupButtons $left={14}>
              <RibbonButton $w={34}>
                <DocIcon s={28} />
                <span>New</span>
              </RibbonButton>
              <RibbonButton $w={52}>
                <CloneIcon s={28} />
                <span>Clone...</span>
              </RibbonButton>
            </GroupButtons>
            <GroupLabel>Records Creation</GroupLabel>
          </RibbonGroup>
          <RibbonSep />
          <RibbonGroup $w={259}>
            <GroupButtons $left={4}>
              <RibbonButton $w={36} $off>
                <Floppy s={28} />
                <span>Save</span>
              </RibbonButton>
              <RibbonButton $w={54} $off>
                <FloppyClose s={28} />
                <span>Save and<br />Close</span>
              </RibbonButton>
              <RibbonButton $w={70} $off>
                <FloppyNew s={28} />
                <span>Save and New</span>
              </RibbonButton>
              <RibbonButton $w={52} $off>
                <FloppyClone s={28} />
                <span>Save and<br />Clone</span>
              </RibbonButton>
              <RibbonButton $w={38} $off>
                <UndoArrow s={28} />
                <span>Cancel</span>
              </RibbonButton>
            </GroupButtons>
            <GroupLabel>Save</GroupLabel>
          </RibbonGroup>
          <RibbonSep />
          <RibbonGroup $w={88}>
            <GroupButtons>
              <RibbonButton $w={44}>
                <SpellIcon />
                <SpellLabel>Check<br />Spelling</SpellLabel>
              </RibbonButton>
              <RibbonButton $w={38}>
                <XIcon s={28} />
                <span>Delete</span>
              </RibbonButton>
            </GroupButtons>
            <GroupLabel>Edit</GroupLabel>
          </RibbonGroup>
          <RibbonSep />
          <RibbonGroup $w={128}>
            <GroupButtons $center>
              <RibbonButton $w={80} $off>
                <RelatedIcon s={28} />
                <span>Open Related<br />Record</span>
              </RibbonButton>
            </GroupButtons>
            <GroupLabel>Open Related Record</GroupLabel>
          </RibbonGroup>
          <RibbonSep />
          <RibbonGroup $w={130}>
            <GroupButtons>
              <RibbonButton $w={44}>
                <Refresh s={28} />
                <span>Refresh</span>
              </RibbonButton>
              <RibbonButton $w={40}>
                <AuditIcon s={28} />
                <span>Audit<br />Log</span>
              </RibbonButton>
              <RibbonButton $w={44}>
                <ReportIcon s={28} />
                <span>Reports</span>
              </RibbonButton>
            </GroupButtons>
            <GroupLabel>View</GroupLabel>
          </RibbonGroup>
          <RibbonSep />
          <RibbonGroup $w={155}>
            <GroupButtons>
              <RibbonButton $w={44}>
                <FindIcon s={28} />
                <span>Find</span>
              </RibbonButton>
              <RibbonButton $w={44} $off>
                <CircleArrow s={28} />
                <span>Previous<br />Record</span>
              </RibbonButton>
              <RibbonButton $w={64}>
                <CircleArrow s={28} c={GREEN} down />
                <span>Next Record</span>
              </RibbonButton>
            </GroupButtons>
            <GroupLabel>Records Navigation</GroupLabel>
          </RibbonGroup>
          <RibbonSep />
          <RibbonGroup $w={51}>
            <GroupButtons $center>
              <RibbonButton $w={50}>
                <CloseSquare s={28} />
                <span>Close</span>
              </RibbonButton>
            </GroupButtons>
            <GroupLabel>Close</GroupLabel>
          </RibbonGroup>
          <RibbonSep />
          <LogoGroup>
            <LogoRow>
              <LogoMark s={30} id="m" />
              <LogoWord>
                Event<b>Pro</b>
              </LogoWord>
            </LogoRow>
            <Collapse>
              <Chevron />
            </Collapse>
          </LogoGroup>
        </Ribbon>
        <Body>
          <BodyMain>
            <TopPanels>
              <SetupPanel>
                <PanelHead>Event Setup Function</PanelHead>
                <FormRows>
                  <FormRow>
                    <Label $w={87}>Function Name:*</Label>
                    <Field $w={523} $green>Day 1</Field>
                  </FormRow>
                  <FormRow>
                    <Label $w={87}>Function Type:</Label>
                    <Field $w={523} $green>
                      <FieldValue>Session</FieldValue>
                      <PickTools pick />
                    </Field>
                  </FormRow>
                  <FormRow>
                    <Label $w={87}>Theme:</Label>
                    <Field $w={523} />
                  </FormRow>
                  <FormRow>
                    <Label $w={87}>Number:</Label>
                    <Field $w={523}>001</Field>
                  </FormRow>
                  <FormRow>
                    <Label $w={87}>Language:</Label>
                    <Field $w={523} />
                  </FormRow>
                </FormRows>
                <CheckRow>
                  <Label $w={134}>Automatically Assign Seats</Label>
                  <CheckBox $after={159}><CheckMark /></CheckBox>
                  <Label $w={133}>Tickets Required</Label>
                  <CheckBox><CheckMark /></CheckBox>
                </CheckRow>
              </SetupPanel>
              <SidePanel>
                <TabStrip $h={20} $gap={1}>
                  <Tab $w={55} $active>Financial</Tab>
                  <Tab $w={62}>Attendance</Tab>
                  <Tab $w={102} $tight>Location/Date/Time</Tab>
                </TabStrip>
                <SideBox>
                  <FormRows $side>
                    <MoneyField label="Cost:" value="$0.00" />
                    <MoneyField label="Charge:" value="$100.00" />
                    <SideField label="Cost Center:" value="US" pick />
                    <SideField label="Department Code:" value="Events" pick />
                    <SideField label="Income Budget Item:" value="Registration Income\Income\Income" />
                    <SideField label="Expense Budget Item:" value="Registration Expense\Expense\Expense" />
                  </FormRows>
                </SideBox>
              </SidePanel>
            </TopPanels>
            <LowerTabs>
              <TabStrip $h={23} $left={2} $gap={1}>
                <Tab $w={101}>
                  <DollarIcon s={16} />
                  Function Rates
                </Tab>
                <Tab $w={59}>
                  <TableTabIcon />
                  Tables
                </Tab>
                <Tab $w={67}>
                  <GridClockIcon s={16} />
                  Itinerary
                </Tab>
                <Tab $w={95} $active>
                  <BadgeIcon />
                  Registrations
                </Tab>
                <Tab $w={78} $red>
                  <NoteIcon />
                  Description
                </Tab>
                <Tab $w={124}>
                  <NoteIcon />
                  Setup Requirements
                </Tab>
              </TabStrip>
            </LowerTabs>
            <GridBox>
              <Toolbar $left={1}>
                <ToolSlot><DollarIcon s={17} badge="star" /></ToolSlot>
                <ToolSlot><DollarIcon s={17} badge="refresh" /></ToolSlot>
                <ToolSlot $w={22}><CalcIcon s={14} /></ToolSlot>
                <ToolSep $m={4} />
                <ToolSlot $w={20}><PickIcon s={14} /></ToolSlot>
                <ToolSep $m={4} />
                <ToolSlot $w={30}><WindowDropIcon s={15} /><Caret /></ToolSlot>
                <ToolSlot $w={24}><FolderUpIcon s={15} /></ToolSlot>
                <ToolSlot $w={26}><HistoryIcon s={15} /></ToolSlot>
                <ToolSlot $w={22}><PanelsIcon s={14} /></ToolSlot>
                <ToolSep $m={3} />
                <ToolSlot $w={20}><BlocksIcon s={16} /></ToolSlot>
                <ToolSep $m={3} />
                <ToolSlot $w={24}><CircleArrow s={14} /></ToolSlot>
                <ToolSlot $w={24}><CircleArrow s={14} c={GREEN} down /></ToolSlot>
                <ToolSep $m={2} />
                <ToolSlot $w={34}><FilterIcon s={13} /><Caret /></ToolSlot>
                <ToolSep $m={2} />
                <ToolSlot $w={36}><LayoutIcon s={15} /><Caret /></ToolSlot>
                <ToolSep $m={4} />
                <ToolSlot $w={22}><PreviewIcon s={15} /></ToolSlot>
              </Toolbar>
              <GridHead $cols={LOWER_COLS}>
                <div />
                <HeadCell>Attendee Type</HeadCell>
                <HeadCell>Status</HeadCell>
                <HeadCell>
                  Name
                  <span style={{ paddingRight: 17 }}><Caret up c="#888" w={9} /></span>
                </HeadCell>
                <HeadCell>Total Charge</HeadCell>
                <HeadCell>Seats</HeadCell>
                <HeadCell>Seats Assigned</HeadCell>
              </GridHead>
              {people.map((row, i) => (
                <RegistrationRow row={row} index={i} key={row[1]} />
              ))}
            </GridBox>
          </BodyMain>
          <ScrollTrack $row>
            <ScrollBtn><Caret up /></ScrollBtn>
            <ScrollThumb $h={274} />
            <ScrollBtn><Caret /></ScrollBtn>
          </ScrollTrack>
        </Body>
        <StatusBar>
          <Grip><GripDots /></Grip>
        </StatusBar>
      </Inner>
    </FunctionWindow>
  );
}

export default function App() {
  return (
    <Desktop>
      <Global />
      <Shell>
        <TitleBar>
          <TitleText>5574: Conference &amp; Expo - Event - EventPro</TitleText>
          <Qat $left={6} $gap={6}>
            <LogoMark s={18} id="q" />
            <Refresh s={14} />
            <GridGearIcon s={15} />
            <GridClockIcon s={15} badge />
            <ReportIcon s={14} />
            <ToolSlot $w={16}><Caret c="#555" /></ToolSlot>
          </Qat>
          <WinControls c="#999" right={7} />
        </TitleBar>
        <ShellClient>
          <ShellStrip />
          <ShellGap />
          <SideColumn>
            <SideLogo>Event<b>Pro</b></SideLogo>
            <SideChevron><Chevron /></SideChevron>
            <SideDrop><Caret /></SideDrop>
            <ScrollTrack>
              <ScrollBtn><Caret up /></ScrollBtn>
              <ScrollThumb $h={326} />
              <ScrollBtn><Caret /></ScrollBtn>
            </ScrollTrack>
          </SideColumn>
        </ShellClient>
        <StatusBar>
          <Grip><GripDots /></Grip>
        </StatusBar>
      </Shell>
      <EventWindowView />
      <FunctionWindowView />
    </Desktop>
  );
}
